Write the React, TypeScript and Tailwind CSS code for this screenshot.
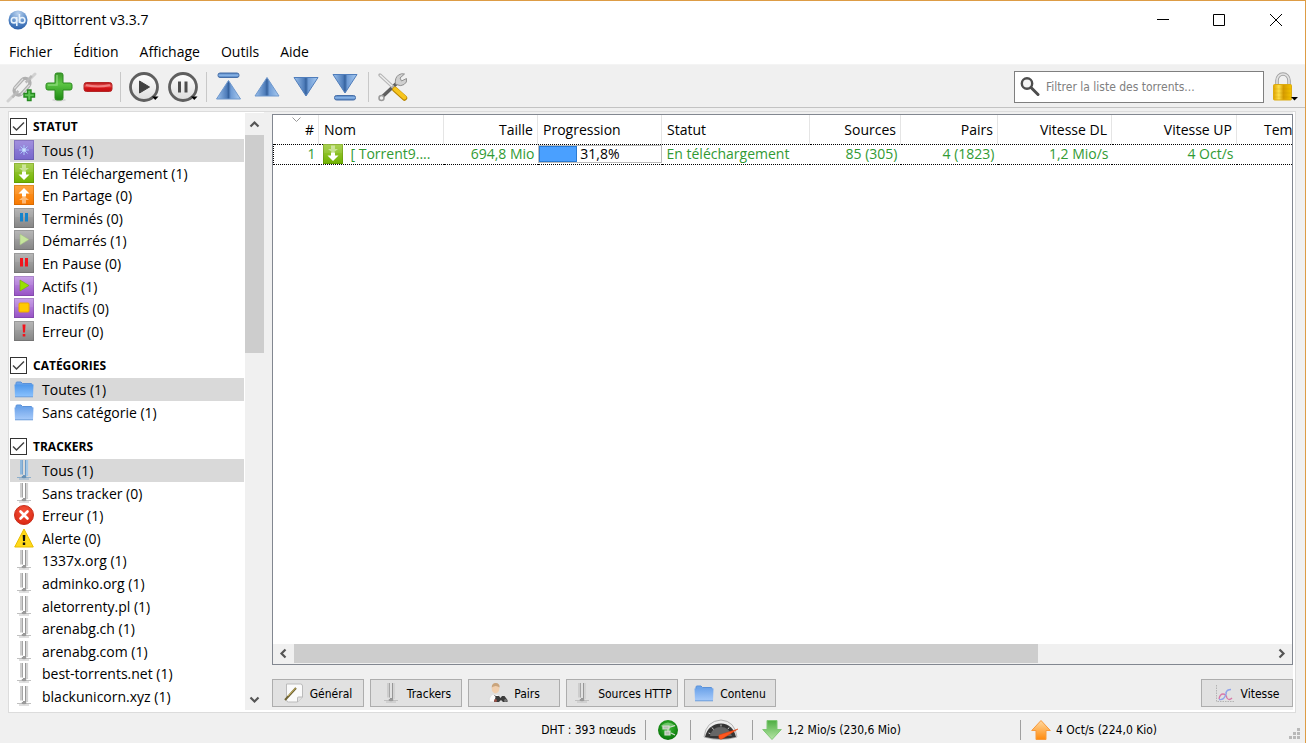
import React from "react";

const Gradients = () => (
  <svg width="0" height="0" className="absolute" aria-hidden="true">
    <defs>
      <linearGradient id="green" x1="0" y1="0" x2="0" y2="1"><stop offset="0" stopColor="#3d9a2c" /><stop offset="0.4" stopColor="#5cc544" /><stop offset="1" stopColor="#1d8a12" /></linearGradient>
      <linearGradient id="red" x1="0" y1="0" x2="0" y2="1"><stop offset="0" stopColor="#b00d10" /><stop offset="0.4" stopColor="#ee5555" /><stop offset="0.6" stopColor="#d41317" /><stop offset="1" stopColor="#c01014" /></linearGradient>
      <linearGradient id="blue" x1="0" y1="0" x2="1" y2="0"><stop offset="0" stopColor="#9cc2ee" /><stop offset="0.42" stopColor="#4f7dba" /><stop offset="0.5" stopColor="#34619d" /><stop offset="0.6" stopColor="#6f9cd6" /><stop offset="1" stopColor="#a9cbf0" /></linearGradient>
      <linearGradient id="bar" x1="0" y1="0" x2="0" y2="1"><stop offset="0" stopColor="#4878b8" /><stop offset="0.5" stopColor="#8db8ea" /><stop offset="1" stopColor="#4878b8" /></linearGradient>
      <linearGradient id="disc" x1="0" y1="0" x2="0" y2="1"><stop offset="0" stopColor="#ffffff" /><stop offset="1" stopColor="#dcdcdc" /></linearGradient>
      <linearGradient id="gold" x1="0" y1="0" x2="1" y2="0"><stop offset="0" stopColor="#e0a400" /><stop offset="0.3" stopColor="#ffe04a" /><stop offset="0.55" stopColor="#d59b00" /><stop offset="1" stopColor="#f5c400" /></linearGradient>
      <linearGradient id="folder" x1="0" y1="0" x2="0" y2="1"><stop offset="0" stopColor="#4f97ea" /><stop offset="1" stopColor="#8cc3ff" /></linearGradient>
      <linearGradient id="pale" x1="0" y1="0" x2="0" y2="1"><stop offset="0" stopColor="#6ea4ea" /><stop offset="1" stopColor="#a8cbfa" /></linearGradient>
      <linearGradient id="purple" x1="0" y1="0" x2="0" y2="1"><stop offset="0" stopColor="#c59be6" /><stop offset="1" stopColor="#9650c4" /></linearGradient>
      <linearGradient id="violet" x1="0" y1="0" x2="0" y2="1"><stop offset="0" stopColor="#9a86dc" /><stop offset="1" stopColor="#7767cb" /></linearGradient>
      <linearGradient id="gray" x1="0" y1="0" x2="0" y2="1"><stop offset="0" stopColor="#b2b2b2" /><stop offset="1" stopColor="#858585" /></linearGradient>
      <linearGradient id="lime" x1="0" y1="0" x2="0" y2="1"><stop offset="0" stopColor="#a5cf45" /><stop offset="1" stopColor="#6fb200" /></linearGradient>
      <linearGradient id="orange" x1="0" y1="0" x2="0" y2="1"><stop offset="0" stopColor="#ff9d2e" /><stop offset="1" stopColor="#f87800" /></linearGradient>
      <linearGradient id="down" x1="0" y1="0" x2="0" y2="1"><stop offset="0" stopColor="#4fae43" /><stop offset="1" stopColor="#b5e5a5" /></linearGradient>
      <linearGradient id="up" x1="0" y1="0" x2="0" y2="1"><stop offset="0" stopColor="#ffd9a0" /><stop offset="1" stopColor="#ff8a0c" /></linearGradient>
      <radialGradient id="logo" cx="0.5" cy="0.15" r="0.9"><stop offset="0" stopColor="#bad2ee" /><stop offset="0.6" stopColor="#5487c6" /><stop offset="1" stopColor="#2559a5" /></radialGradient>
      <radialGradient id="globe" cx="0.5" cy="0.4" r="0.6"><stop offset="0" stopColor="#3fc238" /><stop offset="1" stopColor="#087408" /></radialGradient>
      <radialGradient id="err" cx="0.5" cy="0.3" r="0.7"><stop offset="0" stopColor="#f4533a" /><stop offset="1" stopColor="#db2813" /></radialGradient>
    </defs>
  </svg>
);

const Logo = () => (
  <svg width="20" height="20" viewBox="0 0 20 20">
    <circle cx="10" cy="10" r="9.5" fill="url(#logo)" />
    <g fill="none" stroke="#e8f2fc" strokeWidth="1.6">
      <circle cx="6" cy="10.2" r="2.7" /><path d="M8.800 7v9M11.400 4v9" /><circle cx="14.200" cy="10.2" r="2.7" />
    </g>
  </svg>
);

const Caret = () => <path d="M24 25.500h6.500l-3.250 3.500z" fill="#000" />;

const LinkIcon = () => (
  <svg width="32" height="32" viewBox="0 0 32 32">
    <path d="M2 30l7-7M24 8l5-5" stroke="#d2d2d2" strokeWidth="3" strokeLinecap="round" />
    <g fill="none" transform="rotate(-48 16 15)">
      <rect x="6" y="11" width="19" height="9" rx="4.500" stroke="#b0b0b0" strokeWidth="3.500" />
      <path d="M9 11h13M9 20h13" stroke="#dedede" strokeWidth="1.200" />
      <path d="M1 15.500h9M21 15.500h9" stroke="#bababa" strokeWidth="2.500" />
    </g>
    <path d="M21.500 19h3.500v3.500h3.500v3.500h-3.500v3.500h-3.500v-3.500h-3.500v-3.500h3.500z" fill="#5fc455" stroke="#258a20" strokeWidth="1.400" />
  </svg>
);
const PlusIcon = () => (
  <svg width="32" height="32" viewBox="0 0 32 32">
    <ellipse cx="15" cy="29" rx="7" ry="1.500" fill="#d5d5d5" />
    <path d="M11 4q0-2 2-2h4q2 0 2 2v8h7q2 0 2 2v3q0 2-2 2h-7v8q0 2-2 2h-4q-2 0-2-2v-8h-7q-2 0-2-2v-3q0-2 2-2h7z" fill="url(#green)" stroke="#2c8a20" strokeWidth="1" />
    <path d="M13 4v10H4" fill="none" stroke="#9be08a" strokeWidth="1.500" opacity="0.700" />
  </svg>
);
const MinusIcon = () => (
  <svg width="32" height="32" viewBox="0 0 32 32">
    <rect x="2" y="11.500" width="28" height="9" rx="2.500" fill="url(#red)" stroke="#b42626" />
    <path d="M4 14q12 3 24 0" stroke="#f9a5a5" strokeWidth="2" opacity="0.600" fill="none" />
  </svg>
);
const PlayIcon = () => (
  <svg width="32" height="32" viewBox="0 0 32 32">
    <circle cx="16" cy="16" r="13.500" fill="url(#disc)" stroke="#5f5f5f" strokeWidth="2.800" />
    <path d="M11.500 10v12l10-6z" fill="#414141" stroke="#414141" strokeLinejoin="round" />
    <Caret />
  </svg>
);
const PauseIcon = () => (
  <svg width="32" height="32" viewBox="0 0 32 32">
    <circle cx="16" cy="16" r="13.500" fill="url(#disc)" stroke="#5f5f5f" strokeWidth="2.800" />
    <path d="M11 10.500h3v11h-3zM17.500 10.500h3v11h-3z" fill="#4d4d4d" />
    <Caret />
  </svg>
);
const Arrow = ({ kind }: { kind: "top" | "up" | "down" | "bottom" }) => (
  <svg width="32" height="32" viewBox="0 0 32 32">
    {kind === "top" && <><rect x="5" y="2" width="21" height="4.500" rx="2" fill="url(#bar)" stroke="#476fa8" /><path d="M15.500 9.500L27.500 28h-24z" fill="url(#blue)" stroke="#6f98cd" strokeLinejoin="round" /></>}
    {kind === "up" && <path d="M16 6.500L28 25H4z" fill="url(#blue)" stroke="#6f98cd" strokeLinejoin="round" />}
    {kind === "down" && <path d="M4 6.500h24L16 25z" fill="url(#blue)" stroke="#4f7dbb" strokeLinejoin="round" />}
    {kind === "bottom" && <><path d="M5 3.500h24L17 22z" fill="url(#blue)" stroke="#4f7dbb" strokeLinejoin="round" /><rect x="6.500" y="24.500" width="21" height="4.500" rx="2" fill="url(#bar)" stroke="#476fa8" /></>}
  </svg>
);
const ToolsIcon = () => (
  <svg width="32" height="32" viewBox="0 0 32 32">
    <path d="M4 27L20 12" stroke="#5e5e5e" strokeWidth="3.500" strokeLinecap="round" />
    <circle cx="4.500" cy="27" r="2.500" fill="#eee" stroke="#999" strokeWidth="1.500" />
    <path d="M18.500 13q-1-6 3-9q3-2 6-1l-4.500 4l1.500 3l5-2.500q1 4-2.500 6t-6 .5z" fill="#d0d0d0" stroke="#909090" />
    <path d="M3 4l13 12" stroke="#b4b4b4" strokeWidth="3.500" strokeLinecap="round" />
    <path d="M3 4l12 11" stroke="#efefef" strokeWidth="1.400" />
    <path d="M18 18.500l9.500 8.500" stroke="#b98600" strokeWidth="5.500" strokeLinecap="round" />
    <path d="M18 18l9.500 8.500" stroke="#f7c51e" strokeWidth="4" strokeLinecap="round" />
  </svg>
);
const Magnifier = () => (
  <svg width="20" height="20" viewBox="0 0 20 20">
    <circle cx="7" cy="6.500" r="5.200" fill="#f4f4f4" stroke="#4d4d4d" strokeWidth="2.400" />
    <path d="M11 10.500l7 7" stroke="#4d4d4d" strokeWidth="3" strokeLinecap="round" />
  </svg>
);
const LockIcon = () => (
  <svg width="26" height="32" viewBox="0 0 26 32">
    <path d="M5 15V9.500a6 6.500 0 0 1 12 0v5.500" fill="none" stroke="#a2a2a2" strokeWidth="3.600" />
    <path d="M5 15V9.500a6 6.500 0 0 1 12 0v5.500" fill="none" stroke="#e2e2e2" strokeWidth="1.600" />
    <rect x="1.500" y="13.500" width="18" height="15.500" rx="1" fill="url(#gold)" stroke="#dcab10" />
    <path d="M2 18h17M2 22h17M2 26h17" stroke="#b98900" opacity="0.200" />
    <path d="M19 26h7l-3.500 3.500z" fill="#000" />
  </svg>
);

type IconKind = "all" | "dl" | "seed" | "done" | "resumed" | "paused" | "active" | "inactive" | "error" | "folder" | "folderPale" | "antennaBlue" | "antenna" | "cross" | "warn";

const Tile = ({ fill, children }: { fill: string; children: React.ReactNode }) => (
  <>
    <rect width="20" height="20" fill={fill} />
    <rect x="0.500" y="0.500" width="19" height="19" fill="none" stroke="#000" strokeOpacity="0.120" />
    <path d="M1 1h18v8H1z" fill="#fff" opacity="0.080" />
    {children}
  </>
);
const Antenna = ({ blue = false }: { blue?: boolean }) => (
  <>
    <rect x="6" y="0" width="2.600" height="14.500" fill={blue ? "#91b9dd" : "#cdcdcd"} />
    <path d="M8.500 0v14.500" stroke={blue ? "#7aa5cd" : "#a5a5a5"} />
    <rect x="11.500" y="0" width="2.600" height="16" fill={blue ? "#a2c7e8" : "#d3d3d3"} />
    <path d="M11.500 0v16M9 15.500h2.500v-4" stroke={blue ? "#6d9ac4" : "#979797"} fill="none" />
    <path d="M3 17.500h14M5 19h10" stroke={blue ? "#8eafcc" : "#c0c0c0"} />
    <ellipse cx="10" cy="17" rx="2.500" ry="1.200" fill={blue ? "#6890b2" : "#9b9b9b"} />
  </>
);
const Icon = ({ kind }: { kind: IconKind }) => (
  <svg width="20" height="20" viewBox="0 0 20 20" className="shrink-0">
    {kind === "all" && <Tile fill="url(#violet)"><path d="M10 5v10M5 10h10M6.500 6.500l7 7M13.500 6.500l-7 7" stroke="#a9cafa" strokeWidth="1" /><circle cx="10" cy="10" r="1.800" fill="#cbe2ff" /></Tile>}
    {kind === "dl" && <Tile fill="url(#lime)"><path d="M8 1.500h4v3.500h3l-5 4-5-4h3z" fill="#fff" opacity="0.450" /><path d="M8 8.500h4v3h3.500L10 17l-5.500-5.500H8z" fill="#fff" /></Tile>}
    {kind === "seed" && <Tile fill="url(#orange)"><path d="M8 18.500h4v-3.500h3l-5-4-5 4h3z" fill="#fff" opacity="0.450" /><path d="M8 11.500h4v-3h3.500L10 3 4.500 8.500H8z" fill="#fff" /></Tile>}
    {kind === "done" && <Tile fill="url(#gray)"><path d="M6 5h3v8.500H6zM11 5h3v8.500h-3z" fill="#1483cb" /></Tile>}
    {kind === "resumed" && <Tile fill="url(#gray)"><path d="M6 4v11l9-5.500z" fill="#c7e69d" stroke="#a4bd86" strokeWidth="0.600" /></Tile>}
    {kind === "paused" && <Tile fill="url(#gray)"><path d="M6 5h3v8.500H6zM11 5h3v8.500h-3z" fill="#f3141c" /></Tile>}
    {kind === "active" && <Tile fill="url(#purple)"><path d="M6 4v11l9-5.500z" fill="#98e000" stroke="#73a900" strokeWidth="0.600" /></Tile>}
    {kind === "inactive" && <Tile fill="url(#purple)"><rect x="5" y="5" width="10" height="9" rx="1" fill="#ffca00" stroke="#eca800" /></Tile>}
    {kind === "error" && <Tile fill="url(#gray)"><path d="M8.500 3.500h3l-.5 8H9zM8.700 13h2.600v2.600H8.700z" fill="#f3141c" /></Tile>}
    {(kind === "folder" || kind === "folderPale") && <><path d="M2 6V4q0-1 1-1h4l1.500 1.500H17q1 0 1 1V7H2z" fill="#6ca5ea" stroke="#5b91d8" /><path d="M.5 5.500h19L19 18H1z" fill={kind === "folder" ? "url(#folder)" : "url(#pale)"} /><path d="M1 17.800h18" stroke="#6e9fdb" /></>}
    {kind === "antennaBlue" && <Antenna blue />}
    {kind === "antenna" && <Antenna />}
    {kind === "cross" && <><circle cx="10" cy="10" r="9.500" fill="url(#err)" stroke="#c92f1c" /><path d="M6.500 6.500l7 7M13.500 6.500l-7 7" stroke="#fff" strokeWidth="2.600" strokeLinecap="round" /></>}
    {kind === "warn" && <><path d="M10 1l9.300 18H.7z" fill="#ffd91a" stroke="#e9bd00" strokeLinejoin="round" /><path d="M8.700 7h2.600l-.3 6H9zM8.800 14.500h2.400v2.400H8.800z" fill="#111" /></>}
  </svg>
);

const Note = () => (
  <svg width="20" height="20" viewBox="0 0 20 20">
    <path d="M2.500 1h14q2 0 2 2v11l-5 5h-9q-2 0-2-2z" fill="#fafafa" stroke="#bbb" />
    <path d="M18.500 14h-4q-1 0-1 1v4" fill="#e0e0e0" stroke="#b8b8b8" />
    <path d="M1 17L12 5" stroke="#6f6334" strokeWidth="2" /><path d="M4 13l7.500-8" stroke="#c8b35c" strokeWidth="1" />
  </svg>
);
const Peer = () => (
  <svg width="20" height="20" viewBox="0 0 20 20">
    <path d="M1 19q0-8 6-8t6 8z" fill="#fafafa" stroke="#ddd" />
    <ellipse cx="7.500" cy="5.500" rx="3.800" ry="5" fill="#f0cfae" /><path d="M3.700 4.500q0-4.500 4-4.500t4 4.500q-4-3-8 0z" fill="#c9a47c" />
    <path d="M6.500 12l2 3" stroke="#777" />
    <path d="M8 13h3l1.500 2 1.500-2h2.500l3 4v2h-4.500l-2-2-2 2H6z" fill="#3b3b3b" /><circle cx="7.500" cy="17.500" r="1.500" fill="#9a5348" /><circle cx="17.500" cy="17.500" r="1.500" fill="#777" />
  </svg>
);
const Graph = () => (
  <svg width="20" height="20" viewBox="0 0 20 20">
    <path d="M1.500 2v16.500H19" fill="none" stroke="#b3b3b3" strokeDasharray="1.500 1" />
    <path d="M4 16q1-5 4-5t4 4q2 3 5 0" fill="none" stroke="#d878a8" strokeWidth="1.300" />
    <path d="M4 16.500q4 1 6-3t1-4q1-3 5-3" fill="none" stroke="#8fa3ea" strokeWidth="1.300" />
  </svg>
);
const Globe = () => (
  <svg width="22" height="22" viewBox="0 0 22 22">
    <circle cx="11" cy="11" r="10" fill="url(#globe)" />
    <path d="M3.500 7Q11 0 18.500 7l-3 1H6z" fill="#a6dfa0" opacity="0.550" />
    <path d="M6 7h6v3H6zM8 12h5v4H8zM12 8.500l6-2M11 10v3M14 14l4 2" fill="#b5bfb0" stroke="#d3dccf" strokeWidth="1.200" />
  </svg>
);
const Gauge = () => (
  <svg width="36" height="22" viewBox="0 0 36 22">
    <path d="M1 18Q3 2 18 1q14 1 16 17-16 5-33 0z" fill="#efefef" stroke="#b3b3b3" />
    <path d="M2 18Q5 5 18 4.500 30 5 33 18q-15 4-31 0z" fill="#353535" />
    <path d="M7 17Q9 8 18 8q8 0 11 9z" fill="#666" />
    <path d="M5.500 14l2 .8M9 8.500l1.500 2M18 5.500v2M26 8.500l-1 1.500" stroke="#ccc" />
    <path d="M16 16l19-6-16 10q-4 1-3-4z" fill="#ff571f" stroke="#df3c0a" strokeWidth="0.500" />
  </svg>
);
const SpeedArrow = ({ up = false }: { up?: boolean }) => (
  <svg width="20" height="20" viewBox="0 0 20 20">
    {up ? <path d="M10 .5L19.300 10.500H15v9H5v-9H.7z" fill="url(#up)" stroke="#f79a3c" strokeLinejoin="round" /> : <path d="M5 .5h10v9h4.300L10 19.500.7 9.500H5z" fill="url(#down)" stroke="#7fc774" strokeLinejoin="round" />}
  </svg>
);
const Chevron = ({ dir }: { dir: "up" | "down" | "left" | "right" }) => (
  <svg width="11" height="11" viewBox="0 0 11 11">
    <path d={{ up: "M1.500 7.500l4-4 4 4", down: "M1.500 3.500l4 4 4-4", left: "M7.500 1.500l-4 4 4 4", right: "M3.500 1.500l4 4-4 4" }[dir]} fill="none" stroke="#555" strokeWidth="2.200" />
  </svg>
);

type Row = { icon: IconKind; label: string };
const status: Row[] = [
  { icon: "all", label: "Tous (1)" },
  { icon: "dl", label: "En Téléchargement (1)" },
  { icon: "seed", label: "En Partage (0)" },
  { icon: "done", label: "Terminés (0)" },
  { icon: "resumed", label: "Démarrés (1)" },
  { icon: "paused", label: "En Pause (0)" },
  { icon: "active", label: "Actifs (1)" },
  { icon: "inactive", label: "Inactifs (0)" },
  { icon: "error", label: "Erreur (0)" },
];
const categories: Row[] = [
  { icon: "folder", label: "Toutes (1)" },
  { icon: "folderPale", label: "Sans catégorie (1)" },
];
const trackers: Row[] = [
  { icon: "antennaBlue", label: "Tous (1)" },
  { icon: "antenna", label: "Sans tracker (0)" },
  { icon: "cross", label: "Erreur (1)" },
  { icon: "warn", label: "Alerte (0)" },
  { icon: "antenna", label: "1337x.org (1)" },
  { icon: "antenna", label: "adminko.org (1)" },
  { icon: "antenna", label: "aletorrenty.pl (1)" },
  { icon: "antenna", label: "arenabg.ch (1)" },
  { icon: "antenna", label: "arenabg.com (1)" },
  { icon: "antenna", label: "best-torrents.net (1)" },
  { icon: "antenna", label: "blackunicorn.xyz (1)" },
];

const Section = ({ title, rows, height }: { title: string; rows: Row[]; height: string }) => (
  <section>
    <label className="flex h-[26px] items-center gap-1.5 text-[12px] font-bold text-black">
      <span className="grid size-[17px] place-items-center">
        <input type="checkbox" defaultChecked className="col-start-1 row-start-1 size-[17px] appearance-none border border-[#333] bg-white" />
        <svg width="13" height="13" viewBox="0 0 13 13" className="pointer-events-none col-start-1 row-start-1"><path d="M1 6.500l3.500 3.500L12 2.500" fill="none" stroke="#444" strokeWidth="1.500" /></svg>
      </span>
      <span className="pt-0.5">{title}</span>
    </label>
    <ul className={`grid auto-rows-fr ${height}`}>
      {rows.map((r, i) => (
        <li key={r.label} className={i === 0 ? "bg-[#d9d9d9]" : ""}>
          <button className="flex h-full w-full items-center gap-2 pl-1 text-left whitespace-nowrap">
            <Icon kind={r.icon} />
            <span className="pt-0.5">{r.label}</span>
          </button>
        </li>
      ))}
    </ul>
  </section>
);

const ToolButton = ({ label, wide = false, children }: { label: string; wide?: boolean; children: React.ReactNode }) => (
  <button aria-label={label} className={`flex h-10 items-center justify-center ${wide ? "w-[39px]" : "w-[38px]"}`}>{children}</button>
);
const Separator = () => <span className="h-[30px] w-px bg-[#c8c8c8]" />;

const TabButton = ({ icon, label, width }: { icon: React.ReactNode; label: string; width: string }) => (
  <button className={`flex h-7 items-center justify-center gap-1.5 border border-[#adadad] bg-[#e1e1e1] whitespace-nowrap ${width}`}>
    {icon}
    <span className="pt-0.5">{label}</span>
  </button>
);

const columns = [
  { label: "#", width: "w-[45px]", cls: "text-right pr-1" },
  { label: "Nom", width: "w-[125px]", cls: "text-left pl-[5px]" },
  { label: "Taille", width: "w-[94px]", cls: "text-right pr-1" },
  { label: "Progression", width: "w-[124px]", cls: "text-left pl-[5px]" },
  { label: "Statut", width: "w-[148px]", cls: "text-left pl-[5px]" },
  { label: "Sources", width: "w-[91px]", cls: "text-right pr-1" },
  { label: "Pairs", width: "w-[97px]", cls: "text-right pr-1" },
  { label: "Vitesse DL", width: "w-[114px]", cls: "text-right pr-1" },
  { label: "Vitesse UP", width: "w-[125px]", cls: "text-right pr-1" },
  { label: "Tem", width: "w-auto", cls: "text-left pl-[27px]" },
];

export default function App() {
  return (
    <div className="flex h-screen flex-col overflow-hidden border-t border-r border-[#dd9c45] bg-[#f0f0f0] font-[family-name:Open_Sans,sans-serif] text-[14px] leading-5 text-black">
      <Gradients />
      <header className="flex h-[37px] shrink-0 items-center justify-between bg-white pl-2">
        <h1 className="flex items-center gap-1.5"><Logo />qBittorrent v3.3.7</h1>
        <div className="flex">
          <button aria-label="Réduire" className="flex h-9 w-[56px] items-center justify-center"><svg width="12" height="12"><path d="M0 5.500h12" stroke="#000" /></svg></button>
          <button aria-label="Agrandir" className="flex h-9 w-[56px] items-center justify-center"><svg width="12" height="12"><path d="M.5.500h11v11H.5z" fill="none" stroke="#000" /></svg></button>
          <button aria-label="Fermer" className="flex h-9 w-[58px] items-center justify-center"><svg width="12" height="12"><path d="M0 0l12 12M12 0L0 12" stroke="#000" /></svg></button>
        </div>
      </header>

      <nav className="flex h-[27px] shrink-0 items-center gap-[21px] border-b border-[#f4f4f4] bg-white pt-0.5 pl-[9px]">
        {["Fichier", "Édition", "Affichage", "Outils", "Aide"].map((m) => <button key={m}>{m}</button>)}
      </nav>

      <div className="flex h-[43px] shrink-0 items-center border-b border-[#c3c3c3] pt-px pl-[3px]">
        <ToolButton label="Ajouter un lien"><LinkIcon /></ToolButton>
        <ToolButton label="Ajouter"><PlusIcon /></ToolButton>
        <ToolButton label="Supprimer"><MinusIcon /></ToolButton>
        <span className="flex w-[7px] justify-center"><Separator /></span>
        <ToolButton label="Démarrer" wide><PlayIcon /></ToolButton>
        <ToolButton label="Pause" wide><PauseIcon /></ToolButton>
        <span className="flex w-2 justify-center"><Separator /></span>
        <ToolButton label="Tout en haut"><Arrow kind="top" /></ToolButton>
        <ToolButton label="Monter"><Arrow kind="up" /></ToolButton>
        <ToolButton label="Descendre" wide><Arrow kind="down" /></ToolButton>
        <ToolButton label="Tout en bas"><Arrow kind="bottom" /></ToolButton>
        <span className="flex w-[11px] justify-center"><Separator /></span>
        <ToolButton label="Options"><ToolsIcon /></ToolButton>
        <label className="ml-auto flex h-8 w-[250px] items-center gap-1.5 border border-[#7f7f7f] bg-white pl-[5px]">
          <Magnifier />
          <input aria-label="Filtrer" placeholder="Filtrer la liste des torrents..." className="min-w-0 flex-1 bg-transparent font-[family-name:DejaVu_Sans_Condensed,Open_Sans,sans-serif] text-[12px] outline-none placeholder:text-[#808080]" />
        </label>
        <button aria-label="Verrouiller" className="mr-[7px] ml-2"><LockIcon /></button>
      </div>

      <main className="mt-[3px] mr-[9px] ml-2 flex min-h-0 flex-1 border border-[#dcdcdc] bg-white pb-0.5">
        <aside className="flex w-[255px] shrink-0 overflow-hidden bg-white">
          <div className="flex min-w-0 flex-1 flex-col gap-2.5 overflow-hidden px-px pt-px">
            <Section title="STATUT" rows={status} height="h-[203px]" />
            <Section title="CATÉGORIES" rows={categories} height="h-[45px]" />
            <Section title="TRACKERS" rows={trackers} height="h-[248px]" />
          </div>
          <div className="mt-px flex w-[19px] flex-col items-center bg-[#f0f0f0]">
            <span className="flex h-[22px] items-center"><Chevron dir="up" /></span>
            <span className="h-[218px] w-full bg-[#cdcdcd]" />
            <span className="mt-auto flex h-[22px] items-center"><Chevron dir="down" /></span>
          </div>
        </aside>

        <div className="mr-0.5 flex min-w-0 flex-1 flex-col bg-[#f0f0f0] pt-0.5 pl-2">
          <div className="flex min-h-0 flex-1 flex-col border border-[#828790] bg-white">
            <div className="flex-1 overflow-hidden">
              <table className="w-full table-fixed border-collapse whitespace-nowrap">
                <colgroup>{columns.map((c) => <col key={c.label} className={c.width} />)}</colgroup>
                <thead>
                  <tr className="h-[29px]">
                    {columns.map((c, i) => (
                      <th key={c.label} scope="col" className={`relative border-r border-[#e5e5e5] p-0 pt-0.5 font-normal last:border-r-0 ${c.cls}`}>
                        {i === 0 && <svg width="9" height="5" className="absolute top-0.5 left-[18px]"><path d="M.5.500l4 4 4-4" fill="none" stroke="#999" /></svg>}
                        {c.label}
                      </th>
                    ))}
                  </tr>
                </thead>
                <tbody>
                  <tr className="h-5 border-y border-dotted border-black leading-[18px] text-[#319a33]">
                    <td className="border-l border-dotted border-l-black p-0 pr-[3px] text-right">1</td>
                    <td className="p-0 pl-1"><span className="flex h-[18px] items-center gap-2"><Icon kind="dl" />[ Torrent9....</span></td>
                    <td className="p-0 pr-[3px] text-right">694,8 Mio</td>
                    <td className="p-0">
                      <span className="flex h-[18px] border border-[#bcbcbc] leading-4 text-black"><span className="mr-[3px] w-[31.8%] border border-[#2a7bd3] bg-[#4aa0ff]" />31,8%</span>
                    </td>
                    <td className="p-0 pl-[5px]">En téléchargement</td>
                    <td className="p-0 pr-[3px] text-right">85 (305)</td>
                    <td className="p-0 pr-[3px] text-right">4 (1823)</td>
                    <td className="p-0 pr-[3px] text-right">1,2 Mio/s</td>
                    <td className="p-0 pr-[3px] text-right">4 Oct/s</td>
                    <td className="p-0" />
                  </tr>
                </tbody>
              </table>
            </div>
            <div className="flex h-5 shrink-0 items-center bg-[#f0f0f0] pb-px">
              <span className="flex w-[21px] shrink-0 justify-center"><Chevron dir="left" /></span>
              <span className="h-full w-[73%] bg-[#cdcdcd]" />
              <span className="ml-auto flex w-[21px] shrink-0 justify-center"><Chevron dir="right" /></span>
            </div>
          </div>
          <div className="flex h-[45px] shrink-0 items-center gap-1.5 pt-2.5 font-[family-name:DejaVu_Sans_Condensed,Open_Sans,sans-serif] text-[12px]">
            <TabButton icon={<Note />} label="Général" width="w-[92px]" />
            <TabButton icon={<Icon kind="antenna" />} label="Trackers" width="w-[92px]" />
            <TabButton icon={<Peer />} label="Pairs" width="w-[92px]" />
            <TabButton icon={<Icon kind="antenna" />} label="Sources HTTP" width="w-[112px]" />
            <TabButton icon={<Icon kind="folderPale" />} label="Contenu" width="w-[92px]" />
            <span className="flex-1" />
            <TabButton icon={<Graph />} label="Vitesse" width="w-[92px]" />
          </div>
        </div>
      </main>

      <footer className="flex h-[30px] shrink-0 items-center justify-end pt-1 font-[family-name:DejaVu_Sans_Condensed,Open_Sans,sans-serif] text-[12px] whitespace-nowrap">
        <span className="mr-[9px]">DHT : 393 nœuds</span>
        <div className="flex h-5 w-[45px] items-center border-l border-[#a0a0a0] pl-[11px]"><Globe /></div>
        <div className="flex h-5 w-[62px] items-center border-l border-[#a0a0a0] pl-3"><Gauge /></div>
        <div className="flex h-5 w-[268px] items-center gap-[5px] border-l border-[#a0a0a0] pl-[9px]"><SpeedArrow />1,2 Mio/s (230,6 Mio)</div>
        <div className="flex h-5 w-[285px] items-center gap-[5px] border-l border-[#a0a0a0] pl-[10px]">
          <SpeedArrow up />4 Oct/s (224,0 Kio)
          <svg width="12" height="12" className="mr-1 ml-auto self-end" fill="#b9b9b9"><path d="M8 0h3v3H8zM8 4h3v3H8zM8 8h3v3H8zM4 4h3v3H4zM4 8h3v3H4zM0 8h3v3H0z" /></svg>
        </div>
      </footer>
    </div>
  );
}
